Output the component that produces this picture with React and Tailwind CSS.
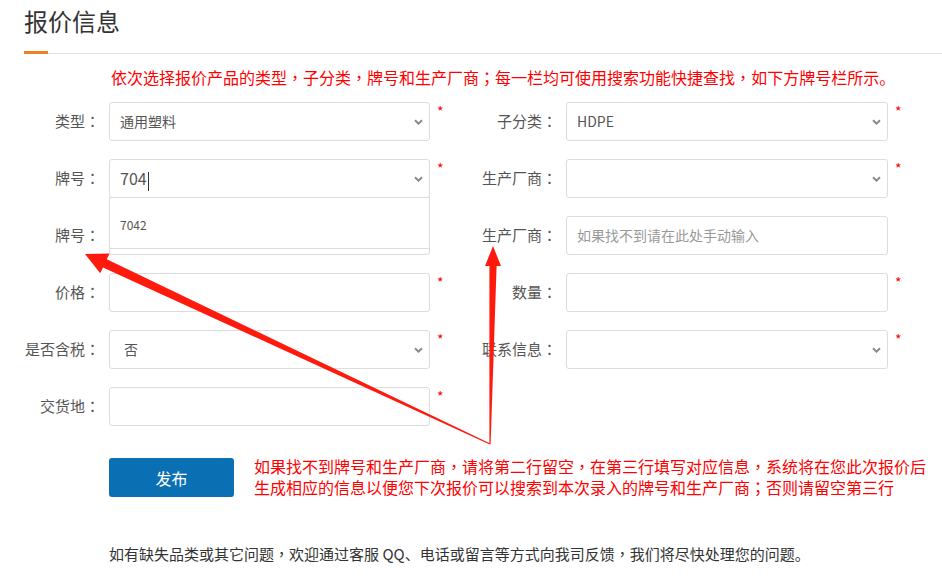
import React from 'react';

const font = { fontFamily: '"Noto Sans CJK SC", "Noto Sans", sans-serif' };
const punctFont = { fontFamily: '"Noto Sans CJK TC", "Noto Sans CJK SC", sans-serif' };

// centred full-width punctuation, as the reference renders it
const T = ({ children }) => (
  <>
    {children.split(/([，；：])/).map((part, i) =>
      /^[，；：]$/.test(part) ? (
        <span key={i} style={punctFont}>{part}</span>
      ) : (
        <React.Fragment key={i}>{part}</React.Fragment>
      )
    )}
  </>
);

const Chevron = () => (
  <svg width="9" height="6" viewBox="0 0 9 6" className="shrink-0">
    <path d="M1 1.2 L4.5 4.6 L8 1.2" fill="none" stroke="#888" strokeWidth="1.9" />
  </svg>
);

const Star = ({ show = true }) => (
  <span className="self-start pl-[7px] text-[14px] leading-[19px] text-[#f00] w-[36px] shrink-0">
    {show ? '*' : ''}
  </span>
);

const Field = ({ type = 'input', value, placeholder, valueClass = 'text-[14px] pl-[10px]', children }) => (
  <div className="relative h-[39px] border border-[#dcdcdc] rounded-[3px] bg-white flex items-center justify-between pr-[6px] shrink-0 w-full">
    {value ? (
      <span className={`${valueClass} text-[#555]`}>{value}</span>
    ) : placeholder ? (
      <span className="text-[14px] pl-[10px] text-[#999]">{placeholder}</span>
    ) : (
      <span />
    )}
    {type === 'select' && <Chevron />}
    {children}
  </div>
);

const LeftCell = ({ label, star = true, children }) => (
  <div className="flex items-center w-[466px] shrink-0">
    <div className="w-[100px] text-right text-[15px] text-[#555] shrink-0"><T>{label}</T></div>
    <div className="ml-[9px] w-[321px] shrink-0">{children}</div>
    <Star show={star} />
  </div>
);

const RightCell = ({ label, star = true, children }) => (
  <div className="flex items-center shrink-0">
    <div className="w-[91px] text-right text-[15px] text-[#555] shrink-0"><T>{label}</T></div>
    <div className="ml-[9px] w-[322px] shrink-0">{children}</div>
    <Star show={star} />
  </div>
);

export default function App() {
  return (
    <div className="relative w-[942px] h-[581px] bg-white overflow-hidden" style={font}>
      <div className="ml-[24px]">
        <div className="h-[51px] pt-[5px]">
          <h1 className="text-[24px] leading-[32px] text-[#333]">报价信息</h1>
        </div>
        <div className="flex items-end h-[3px]">
          <div className="w-[24px] h-[3px] bg-[#f07f22]" />
          <div className="flex-1 h-[1px] bg-[#e3e3e3]" />
        </div>
      </div>

      <p className="ml-[111px] mt-[12px] text-[16px] leading-[22px] text-[#f00] whitespace-nowrap">
        <T>依次选择报价产品的类型，子分类，牌号和生产厂商；每一栏均可使用搜索功能快捷查找，如下方牌号栏所示。</T>
      </p>

      <div className="mt-[14px] flex flex-col gap-[18px]">
        <div className="flex">
          <LeftCell label="类型：">
            <Field type="select" value="通用塑料" />
          </LeftCell>
          <RightCell label="子分类：">
            <Field type="select" value="HDPE" />
          </RightCell>
        </div>

        <div className="flex relative z-10">
          <LeftCell label="牌号：">
            <Field type="select" value={<span>704<span className="inline-block w-[1px] h-[19px] bg-[#333] align-middle ml-[1px]" /></span>} valueClass="text-[16px] pl-[10px]">
              <div className="absolute left-[-1px] right-[-1px] top-full h-[52px] bg-white border border-[#dcdcdc] flex items-center pl-[10px] pt-[3px] text-[12px] text-[#555]">
                7042
              </div>
            </Field>
          </LeftCell>
          <RightCell label="生产厂商：">
            <Field type="select" />
          </RightCell>
        </div>

        <div className="flex">
          <LeftCell label="牌号：" star={false}>
            <Field />
          </LeftCell>
          <RightCell label="生产厂商：" star={false}>
            <Field placeholder="如果找不到请在此处手动输入" />
          </RightCell>
        </div>

        <div className="flex">
          <LeftCell label="价格：">
            <Field />
          </LeftCell>
          <RightCell label="数量：">
            <Field />
          </RightCell>
        </div>

        <div className="flex">
          <LeftCell label="是否含税：">
            <Field type="select" value="否" valueClass="text-[14px] pl-[14px]" />
          </LeftCell>
          <RightCell label="联系信息：">
            <Field type="select" />
          </RightCell>
        </div>

        <div className="flex">
          <LeftCell label="交货地：">
            <Field />
          </LeftCell>
        </div>
      </div>

      <div className="mt-[32px] ml-[109px] flex items-start">
        <button className="w-[125px] h-[39px] rounded-[3px] bg-[#0b6fb4] text-white text-[16px] shrink-0">
          发布
        </button>
        <div className="ml-[20px] -mt-[2px] text-[16px] leading-[21px] text-[#f00] whitespace-nowrap">
          <p><T>如果找不到牌号和生产厂商，请将第二行留空，在第三行填写对应信息，系统将在您此次报价后</T></p>
          <p><T>生成相应的信息以便您下次报价可以搜索到本次录入的牌号和生产厂商；否则请留空第三行</T></p>
        </div>
      </div>

      <p className="ml-[109px] mt-[46px] text-[15px] leading-[20px] text-[#333] whitespace-nowrap">
        <T>如有缺失品类或其它问题，欢迎通过客服 QQ、电话或留言等方式向我司反馈，我们将尽快处理您的问题。</T>
      </p>

      <svg className="absolute inset-0 pointer-events-none z-20" width="942" height="581" viewBox="0 0 942 581">
        <polygon
          points="490.2,443.5 106.8,259.3 109.6,253.4 85,254 100.2,273.3 103,267.4 489.8,444.5"
          fill="#ff1a0e"
        />
        <polygon
          points="490.6,444 496.6,266 501,266 493,246 485,266 489.4,266 489.4,444"
          fill="#ff1a0e"
        />
      </svg>
    </div>
  );
}
